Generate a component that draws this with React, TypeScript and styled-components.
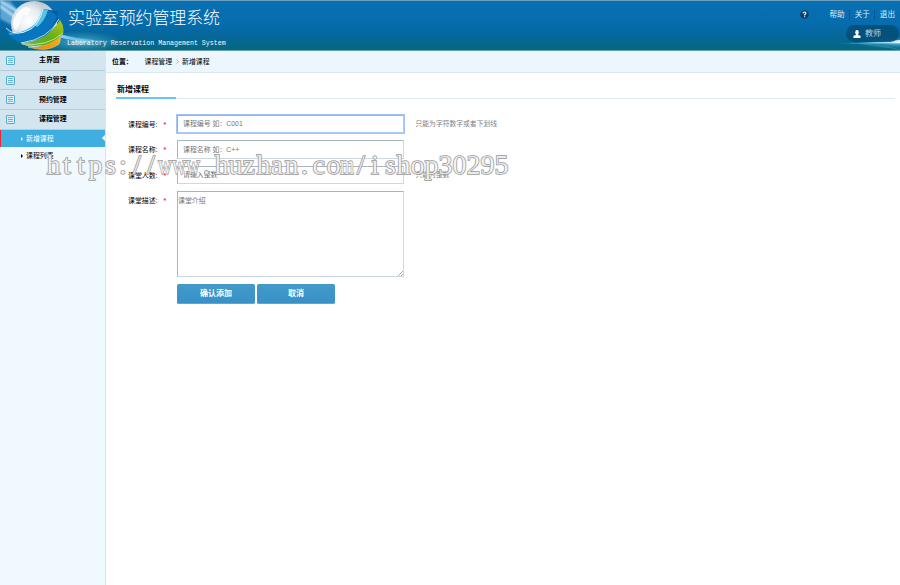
import React from 'react';
import styled, { createGlobalStyle, css } from 'styled-components';

const GlobalStyle = createGlobalStyle`
  *, *::before, *::after { box-sizing: border-box; }
  html, body { margin: 0; padding: 0; overflow: hidden; }
  body {
    font: 6.9px/10px "Liberation Sans", "Noto Sans CJK SC", sans-serif;
    color: #000;
    background: #fff;
  }
`;

const Page = styled.div`
  position: relative;
  display: flex;
  flex-direction: column;
  height: 585px;
  overflow: hidden;
`;

const Header = styled.header`
  position: relative;
  display: flex;
  justify-content: space-between;
  flex: 0 0 51px;
  border-top: 1px solid #6b9fc0;
  border-bottom: 1px solid #5f9fae;
  background: linear-gradient(#0770b3 0%, #066cae 45%, #05679a 70%, #06677f 100%);
  color: #fff;
`;

const HeaderArt = styled.svg`
  position: absolute;
  left: 0;
  top: -1px;
`;

const Brand = styled.div`
  position: relative;
  padding: 4px 0 0 68px;
`;

const BrandTitle = styled.h1`
  margin: 0;
  font: 300 16.9px/24px "Noto Sans CJK SC", sans-serif;
  white-space: nowrap;
`;

const BrandSubtitle = styled.p`
  margin: 10px 0 0 -1px;
  font: 6.62px/9px "Liberation Mono", monospace;
  white-space: nowrap;
  color: #f2faff;
`;

const HeaderTools = styled.div`
  position: relative;
  display: flex;
  flex-direction: column;
  align-items: flex-end;
`;

const TopLinks = styled.nav`
  display: flex;
  align-items: center;
  height: 15px;
  margin-top: 6px;
  padding-right: 5px;
`;

const HelpIcon = styled.svg`
  margin-right: 20px;
`;

const TopLink = styled.a`
  font-size: 7.6px;
  line-height: 10px;
  color: #dceefa;

  & + & {
    margin-left: 4px;
    padding-left: 5px;
    border-left: 1px solid #085890;
  }
`;

const UserBadge = styled.div`
  display: flex;
  align-items: center;
  gap: 4px;
  width: 53px;
  height: 17px;
  margin: 3px 1px 0 0;
  padding-left: 7px;
  border-radius: 9px;
  background: rgba(3, 75, 115, 0.8);
  font-size: 8px;
  color: #b5d3e5;
`;

const Body = styled.div`
  display: flex;
  flex: 1;
  min-height: 0;
`;

const Sidebar = styled.aside`
  flex: 0 0 106px;
  border-right: 1px solid #d0e6f0;
  background: #f0f9fe;
`;

const MenuGroup = styled.div`
  display: flex;
  align-items: center;
  height: 19.7px;
  padding-left: 6px;
  border-bottom: 1px solid #b5cdd9;
  background: #d3e6f0;
  font-weight: bold;

  svg { margin-right: 24px; }
`;

const SubItem = styled.div<{ $active?: boolean }>`
  display: flex;
  align-items: center;
  gap: 3px;
  position: relative;
  height: 17px;
  padding: 1px 0 0 21px;
  color: #000;

  &::before {
    content: '';
    border: 2px solid transparent;
    border-left: 2.5px solid currentColor;
    border-right: 0;
  }

  ${({ $active }) =>
    $active &&
    css`
      padding-left: 20px;
      border-left: 1px solid #f02834;
      background: #3eafe0;
      color: #fff;

      &::after {
        content: '';
        position: absolute;
        right: 0;
        top: 5px;
        border: 3.5px solid transparent;
        border-right: 3.5px solid #fff;
        border-left: 0;
      }
    `}
`;

const Main = styled.main`
  flex: 1;
  min-width: 0;
`;

const Breadcrumb = styled.div`
  display: flex;
  align-items: center;
  height: 22px;
  padding-left: 6px;
  border-bottom: 1px solid #d8e9ef;
  background: #edf6fc;
`;

const Place = styled.b`
  width: 32.5px;
`;

const Separator = styled.svg`
  margin: 0 3px 0 4px;
`;

const FormHead = styled.div`
  display: flex;
  height: 26px;
  margin: 0 5px 0 10px;
  border-bottom: 1px solid #dfebf0;
`;

const FormTitle = styled.h2`
  width: 60px;
  height: 26px;
  margin: 0;
  padding: 11px 0 0 1px;
  border-bottom: 2px solid #66c9f3;
  font-size: 8px;
  line-height: 12px;
`;

const Form = styled.form`
  display: flex;
  flex-direction: column;
  gap: 7px;
  padding: 15.5px 0 0 22px;
`;

const Row = styled.div`
  display: flex;
  align-items: flex-start;
`;

const Label = styled.label`
  display: flex;
  width: 49px;
  padding-top: 5px;
  white-space: nowrap;
`;

const Required = styled.b`
  margin-left: 6px;
  color: #e83232;
`;

const Input = styled.input<{ $focused?: boolean }>`
  width: 227px;
  height: 18.6px;
  padding: 0 5px;
  border: 1px solid;
  border-color: #a7b5bc #ced9df #ced9df #a7b5bc;
  background: #fff;
  font: inherit;
  outline: ${({ $focused }) => ($focused ? '1px solid #a3c4f8' : 'none')};
  outline-offset: ${({ $focused }) => ($focused ? '-0.5px' : '0')};
  ${({ $focused }) => $focused && 'border-color: #8ab4ef #aecbf7 #aecbf7 #8ab4ef;'}

  &::placeholder { color: #757575; }
`;

const Textarea = styled.textarea`
  display: block;
  width: 227px;
  height: 86px;
  padding: 4px 0;
  border: 1px solid;
  border-color: #a7b5bc #ced9df #ced9df #a7b5bc;
  font: inherit;
  outline: none;
  resize: none;

  &::placeholder { color: #757575; }
`;

const TextareaWrap = styled.div`
  position: relative;
`;

const Grip = styled.svg`
  position: absolute;
  right: 1px;
  bottom: 1px;
`;

const Hint = styled.span`
  margin-left: 11.5px;
  padding-top: 4px;
  font-size: 6.8px;
  color: #7f7f7f;
`;

const Actions = styled.div`
  display: flex;
  gap: 2px;
  padding-left: 49px;
`;

const Button = styled.button`
  width: 78px;
  height: 20px;
  padding: 1px 0 0;
  border: 0;
  border-bottom: 1px solid #65a7cb;
  border-radius: 1.5px;
  background: linear-gradient(#439bca, #3791c7);
  color: #fff;
  font: bold 8px/18px "Liberation Sans", "Noto Sans CJK SC", sans-serif;
`;

const Watermark = styled.svg`
  position: absolute;
  left: 46px;
  top: 145px;
  pointer-events: none;
  font-family: "Liberation Serif", serif;
  font-size: 28px;
  fill: rgba(255, 255, 255, 0.8);
  stroke: #999;
  stroke-width: 1.5px;
  paint-order: stroke;
`;

const CELL = 14;

function cells(start: number, text: string) {
  const narrow = 'tsfil:./';
  return [...text]
    .map((c, i) => (start + i) * CELL + (narrow.includes(c) ? 3 : 0.5))
    .join(' ');
}

function HeaderDrawing() {
  return (
    <HeaderArt width="900" height="50" viewBox="0 0 900 50">
      <defs>
        <radialGradient id="glass" cx=".38" cy=".42" r=".62">
          <stop offset="0" stopColor="#fff" />
          <stop offset=".45" stopColor="#e4ebf0" />
          <stop offset=".8" stopColor="#b5c1ca" />
          <stop offset="1" stopColor="#edf3f7" />
        </radialGradient>
        <linearGradient id="blue" x1=".8" y1="0" x2=".2" y2="1">
          <stop stopColor="#0758a5" />
          <stop offset="1" stopColor="#087fc5" />
        </linearGradient>
        <linearGradient id="green" x1="1" y1="0" x2="0" y2="1">
          <stop stopColor="#b4ca18" />
          <stop offset=".5" stopColor="#65ac18" />
          <stop offset="1" stopColor="#69b936" />
        </linearGradient>
        <linearGradient id="orange" x1="1" y1="0" x2="0" y2="1">
          <stop stopColor="#f7bb1d" />
          <stop offset="1" stopColor="#ed7d0d" />
        </linearGradient>
        <linearGradient id="beam" x1="0" x2="1">
          <stop stopColor="#9be0ff" stopOpacity=".9" />
          <stop offset="1" stopColor="#56c7f1" stopOpacity="0" />
        </linearGradient>
        <linearGradient id="flare" x1="0" x2="1">
          <stop stopColor="#4dc9e9" stopOpacity="0" />
          <stop offset="1" stopColor="#d7f7ff" />
        </linearGradient>
        <radialGradient id="glow">
          <stop stopColor="#b9efff" stopOpacity=".8" />
          <stop offset=".35" stopColor="#57b8dd" stopOpacity=".5" />
          <stop offset="1" stopColor="#3ca8d0" stopOpacity="0" />
        </radialGradient>
        <filter id="soft"><feGaussianBlur stdDeviation="1" /></filter>
      </defs>
      <path d="M0 1H10L21 15 12 25 0 19Z" fill="#81bee1" opacity=".7" filter="url(#soft)" />
      <path d="M0 6 18 19M0 1 22 14" stroke="#d8f0ff" strokeWidth="2" filter="url(#soft)" />
      <ellipse cx="81" cy="42" rx="42" ry="11" fill="url(#glow)" />
      <path d="M58 33Q78 41 125 41Q82 44 58 37Z" fill="url(#beam)" />
      <circle cx="34" cy="24" r="23" fill="url(#glass)" />
      <path d="M15 17Q18 10 26 7L31 9 28 14 22 16 19 25 16 31Q10 25 15 17Z" fill="#fff" opacity=".8" />
      <path d="M43 3Q52 7 54 16L48 15 43 8Z" fill="#c5ced5" />
      <path d="M59 36Q62 37 59 44Q48 53 28 47Q47 49 59 36Z" fill="url(#orange)" stroke="#f6dc91" strokeWidth=".5" />
      <path d="M60 20Q65 27 63 34Q47 51 21 44Q47 41 60 20Z" fill="url(#green)" />
      <path d="M22 44Q48 47 63 33" stroke="#e3f5b5" strokeWidth=".7" fill="none" />
      <path d="M6 28Q15 38 31 29Q39 24 43 9L57 11L58 19Q51 40 22 43Q10 40 6 28Z" fill="url(#blue)" />
      <path d="M10 35Q35 36 49 10L57 16Q49 39 22 43Q14 41 10 35Z" fill="#0875be" />
      <path d="M9 34Q34 34 47 10" stroke="#38afe3" strokeWidth="1.5" fill="none" />
      <path d="M34 25Q40 19 42 9L48 10Q45 21 37 27Z" fill="#54c5ea" />
      <path d="M6 28Q15 38 31 29Q39 24 43 9" stroke="#f4fbff" strokeWidth=".8" fill="none" />
      <path d="M21 43Q49 39 59 19" stroke="#d9f2f8" strokeWidth=".8" fill="none" />
      <ellipse cx="900" cy="43" rx="46" ry="6" fill="url(#glow)" />
      <path d="M830 44Q867 43 900 40V43Q870 44 830 44Z" fill="url(#flare)" />
      <path d="M850 43Q883 45 900 50" stroke="#2998b6" strokeWidth=".7" fill="none" />
    </HeaderArt>
  );
}

function ListIcon() {
  return (
    <svg width="9" height="9" viewBox="0 0 9 9" fill="none" stroke="#55abd1">
      <rect x=".5" y=".5" width="8" height="8" rx=".5" fill="#e4f3fa" />
      <path d="M2 2.6h5M2 4.5h5M2 6.4h5" strokeWidth=".9" />
    </svg>
  );
}

const groups = ['主界面', '用户管理', '预约管理', '课程管理'];

const fields = [
  { label: '课程编号:', placeholder: '课程编号 如：C001', hint: '只能为字符数字或者下划线', focused: true },
  { label: '课程名称:', placeholder: '课程名称 如：C++', hint: '', focused: false },
  { label: '课堂人数:', placeholder: '请输入整数', hint: '只能为整数', focused: false },
];

export default function App() {
  return (
    <Page>
      <GlobalStyle />
      <Header>
        <HeaderDrawing />
        <Brand>
          <BrandTitle>实验室预约管理系统</BrandTitle>
          <BrandSubtitle>Laboratory Reservation Management System</BrandSubtitle>
        </Brand>
        <HeaderTools>
          <TopLinks>
            <HelpIcon width="9" height="9" viewBox="0 0 9 9">
              <circle cx="4.5" cy="4.5" r="4.3" fill="#063f68" />
              <path d="M3 3.4Q3.1 2 4.5 2T6 3.3Q6 4 4.6 4.7V5.4M4.6 6.2V7.2" fill="none" stroke="#fff" strokeWidth="1.1" />
            </HelpIcon>
            <TopLink>帮助</TopLink>
            <TopLink>关于</TopLink>
            <TopLink>退出</TopLink>
          </TopLinks>
          <UserBadge>
            <svg width="8" height="8" viewBox="0 0 8 8" fill="#fff">
              <ellipse cx="4" cy="2.4" rx="1.8" ry="2.3" />
              <path d="M3 4h2v1l2.5.8V8h-7V5.8L3 5Z" />
            </svg>
            教师
          </UserBadge>
        </HeaderTools>
      </Header>
      <Body>
        <Sidebar>
          {groups.map((name) => (
            <MenuGroup key={name}><ListIcon />{name}</MenuGroup>
          ))}
          <SubItem $active>新增课程</SubItem>
          <SubItem>课程列表</SubItem>
        </Sidebar>
        <Main>
          <Breadcrumb>
            <Place>位置：</Place>
            <span>课程管理</span>
            <Separator width="3" height="5" viewBox="0 0 3 5"><path d="M.5.5l2 2-2 2" fill="none" stroke="#8b9ba5" strokeWidth=".7" /></Separator>
            <span>新增课程</span>
          </Breadcrumb>
          <FormHead><FormTitle>新增课程</FormTitle></FormHead>
          <Form>
            {fields.map((f) => (
              <Row key={f.label}>
                <Label>{f.label}<Required>*</Required></Label>
                <Input placeholder={f.placeholder} $focused={f.focused} />
                {f.hint && <Hint>{f.hint}</Hint>}
              </Row>
            ))}
            <Row>
              <Label>课堂描述:<Required>*</Required></Label>
              <TextareaWrap>
                <Textarea placeholder="课堂介绍" />
                <Grip width="5" height="5" viewBox="0 0 5 5"><path d="M0 5 5 0M3 5 5 3" stroke="#777" strokeWidth=".6" /></Grip>
              </TextareaWrap>
            </Row>
            <Actions>
              <Button type="button">确认添加</Button>
              <Button type="button">取消</Button>
            </Actions>
          </Form>
        </Main>
      </Body>
      <Watermark width="466" height="40" viewBox="0 0 466 40">
        <text y="29">
          <tspan x={cells(0, 'https://')}>https://</tspan>
          <tspan x={8 * CELL} textLength={3 * CELL} lengthAdjust="spacingAndGlyphs">www</tspan>
          <tspan x={cells(11, '.huzhan.co')}>.huzhan.co</tspan>
          <tspan x={21 * CELL} textLength={CELL} lengthAdjust="spacingAndGlyphs">m</tspan>
          <tspan x={cells(22, '/ishop30295')}>/ishop30295</tspan>
        </text>
      </Watermark>
    </Page>
  );
}
